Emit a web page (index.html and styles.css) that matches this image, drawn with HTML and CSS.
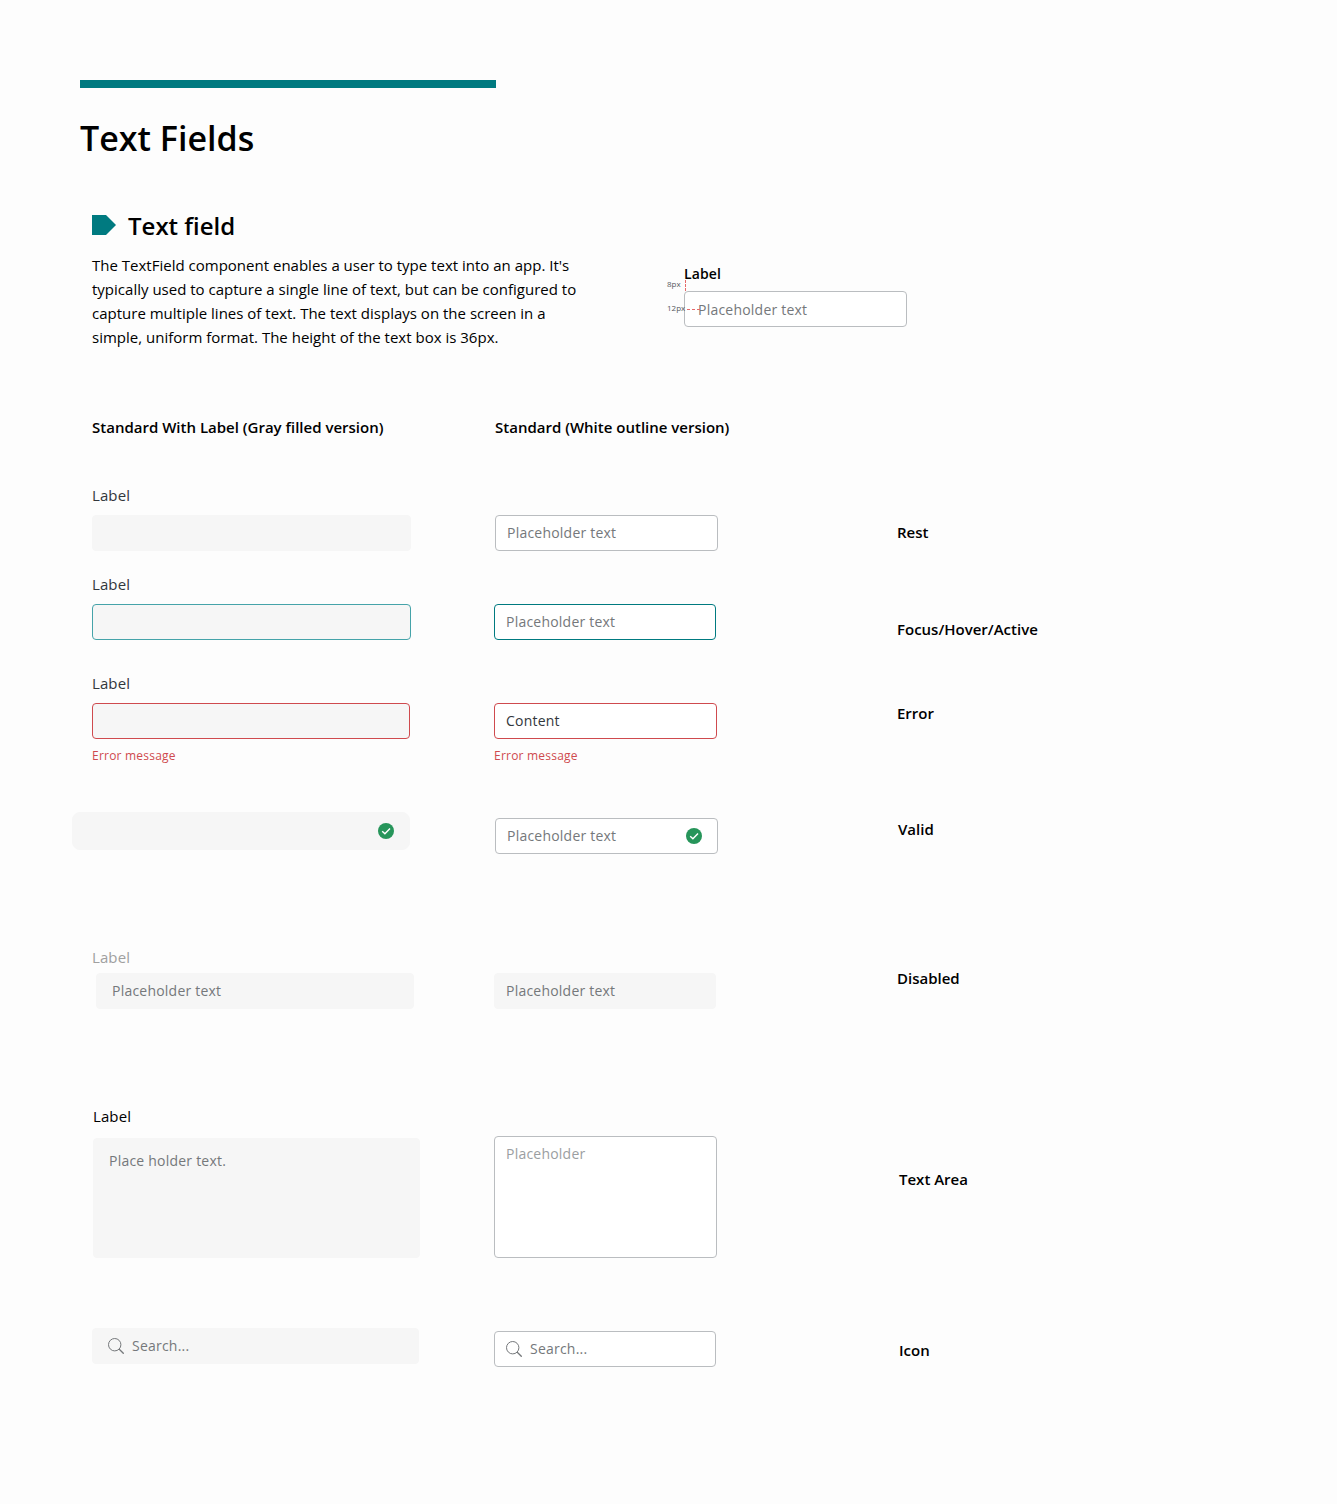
FILE: index.html
```html
<!DOCTYPE html>
<html lang="en">
<head>
<meta charset="utf-8">
<title>Text Fields</title>
<link rel="stylesheet" href="styles.css">
</head>
<body>
<svg class="sprite" aria-hidden="true">
  <symbol id="check" viewBox="0 0 16 16"><circle cx="8" cy="8" r="8" fill="#26955a"/><path d="M4.2 8.3 6.9 10.8 12 5.4" fill="none" stroke="#fff" stroke-width="1.4"/></symbol>
  <symbol id="search" viewBox="0 0 16 16"><circle cx="6.7" cy="6.7" r="6.2" fill="none" stroke="#75787b"/><path d="M11 11 15.7 15.7" fill="none" stroke="#75787b" stroke-width="1.3"/></symbol>
</svg>
<main class="page">
  <div class="accent"></div>
  <h1 class="title">Text Fields</h1>

  <section class="intro">
    <div class="intro-copy">
      <h2 class="subtitle"><svg class="tag" viewBox="0 0 24 20"><path d="M0 0H14L24 10 14 20H0Z" fill="#007a80"/></svg>Text field</h2>
      <p class="description">The TextField component enables a user to type text into an app. It's<br>typically used to capture a single line of text, but can be configured to<br>capture multiple lines of text. The text displays on the screen in a<br>simple, uniform format. The height of the text box is 36px.</p>
    </div>
    <div class="anatomy">
      <div class="anatomy-label">Label</div>
      <div class="field outline w223 anatomy-field">Placeholder text</div>
      <span class="measure measure-v">8px</span><i class="guide guide-v"></i>
      <span class="measure measure-h">12px</span><i class="guide guide-h"></i>
    </div>
  </section>

  <section class="states">
    <div class="row headings">
      <h3 class="heading">Standard With Label (Gray filled version)</h3>
      <h3 class="heading heading-outline">Standard (White outline version)</h3>
    </div>

    <div class="row rest">
      <div class="cell"><div class="label">Label</div><div class="field filled w319"></div></div>
      <div class="cell"><div class="field outline w223">Placeholder text</div></div>
      <div class="state">Rest</div>
    </div>

    <div class="row focus">
      <div class="cell"><div class="label">Label</div><div class="field filled w319 focused-soft"></div></div>
      <div class="cell"><div class="field outline w222 focused">Placeholder text</div></div>
      <div class="state">Focus/Hover/Active</div>
    </div>

    <div class="row error">
      <div class="cell"><div class="label">Label</div><div class="field filled w318 invalid"></div><div class="message">Error message</div></div>
      <div class="cell"><div class="field outline w223 invalid">Content</div><div class="message">Error message</div></div>
      <div class="state">Error</div>
    </div>

    <div class="row valid">
      <div class="cell"><div class="field filled valid-filled"><svg class="icon"><use href="#check"/></svg></div></div>
      <div class="cell"><div class="field outline w223 valid-outline">Placeholder text<svg class="icon"><use href="#check"/></svg></div></div>
      <div class="state">Valid</div>
    </div>

    <div class="row disabled">
      <div class="cell"><div class="label muted">Label</div><div class="field filled w318">Placeholder text</div></div>
      <div class="cell"><div class="field filled w222">Placeholder text</div></div>
      <div class="state">Disabled</div>
    </div>

    <div class="row area">
      <div class="cell"><div class="label dark">Label</div><div class="field filled w327">Place holder text.</div></div>
      <div class="cell"><div class="field outline w223">Placeholder</div></div>
      <div class="state">Text Area</div>
    </div>

    <div class="row search">
      <div class="cell"><div class="field filled w327"><svg class="icon"><use href="#search"/></svg>Search...</div></div>
      <div class="cell"><div class="field outline w222"><svg class="icon"><use href="#search"/></svg>Search...</div></div>
      <div class="state">Icon</div>
    </div>
  </section>
</main>
</body>
</html>
```
FILE: styles.css
```css
* { box-sizing: border-box; }
body { margin: 0; background: #fdfdfd; color: #000; font-family: "Open Sans", sans-serif; font-size: 15px; line-height: 24px; }
h1, h2, h3, p { margin: 0; font-weight: 600; }
.sprite { display: none; }
.page { height: 1504px; padding: 80px 80px 0; }
.accent { width: 416px; height: 8px; background: #007a80; }
.title { margin-top: 26px; font-size: 34px; line-height: 48px; }

.intro { display: flex; height: 254px; padding: 48px 0 0 12px; }
.intro-copy { width: 592px; }
.subtitle { display: flex; align-items: center; gap: 12px; height: 32px; font-size: 24px; line-height: 32px; }
.tag { width: 24px; height: 20px; margin-bottom: 2px; }
.description { margin-top: 11px; font-weight: 400; letter-spacing: .005px; white-space: nowrap; }
.anatomy { position: relative; padding-top: 54px; }
.anatomy-label { font-size: 14px; font-weight: 600; line-height: 20px; letter-spacing: .1px; }
.measure { position: absolute; left: -17px; font-size: 8px; line-height: 12px; color: #55595d; }
.measure-v { top: 68px; }
.measure-h { top: 92px; }
.guide { position: absolute; }
.guide-v { left: 1px; top: 70px; height: 11px; border-left: 1px dashed #e56a6a; }
.guide-h { left: 3px; top: 99px; width: 13px; border-top: 1px dashed #e56a6a; }

.states { padding-left: 12px; }
.row { display: grid; grid-template-columns: 402px 403px 1fr; align-items: start; }
.headings { height: 67px; margin-top: -1px; margin-bottom: 2px; }
.heading { font-size: 15px; line-height: 24px; }
.heading-outline { margin-left: 1px; }
.label { margin: -1px 0 8px; color: #32373c; letter-spacing: .1px; }
.muted { color: #a0a0a0; }
.dark { color: #000; }
.state { font-weight: 600; }
.message { margin-top: 9px; font-size: 12px; line-height: 16px; letter-spacing: .22px; color: #cf4a4e; }

.field { display: flex; align-items: center; height: 36px; padding: 0 11px; border: 1px solid transparent; border-radius: 4px; font-size: 14px; line-height: 20px; letter-spacing: .22px; color: #75787b; }
.anatomy-field { margin-top: 7px; padding: 1px 0 0 13px; }
.filled { background: #f6f6f6; border-color: #f6f6f6; }
.outline { background: #fff; border-color: #babdc0; }
.focused-soft { border-color: #45a3a9; }
.focused { border-color: #007a80; }
.invalid { border-color: #cf4a4e; color: #32373c; }
.icon { flex: none; width: 16px; height: 16px; }
.w222 { width: 222px; }
.w223 { width: 223px; }
.w318 { width: 318px; }
.w319 { width: 319px; }
.w327 { width: 327px; }

.rest { height: 89px; }
.rest .outline { margin: 31px 0 0 1px; }
.rest .state { margin-top: 36px; }
.focus { height: 99px; }
.focus .outline { margin-top: 31px; }
.focus .state { margin-top: 44px; }
.error { height: 134px; }
.error .outline { margin-top: 31px; }
.error .state { margin-top: 29px; }
.valid { height: 140px; }
.valid-filled { justify-content: flex-end; width: 338px; height: 38px; margin: 6px 0 0 -20px; padding-right: 15px; border-radius: 8px; }
.valid-outline { justify-content: space-between; margin: 12px 0 0 1px; padding-right: 15px; }
.valid .state { margin: 11px 0 0 1px; }
.disabled { height: 159px; }
.disabled .label { margin-bottom: 4px; }
.disabled .w318 { margin-left: 4px; padding-left: 15px; }
.disabled .w222 { margin-top: 27px; }
.disabled .state { margin-top: 20px; }
.area { height: 215px; }
.area .label { margin: -1px 0 10px 1px; }
.area .field { align-items: flex-start; }
.area .filled { height: 120px; margin-left: 1px; padding: 12px 15px; }
.area .outline { height: 122px; margin-top: 31px; padding-top: 7px; color: #9b9ea1; }
.area .state { margin: 62px 0 0 2px; }
.search .field { gap: 8px; }
.search .filled { margin-top: 8px; padding-left: 15px; }
.search .outline { margin-top: 11px; }
.search .state { margin: 18px 0 0 2px; }
```
